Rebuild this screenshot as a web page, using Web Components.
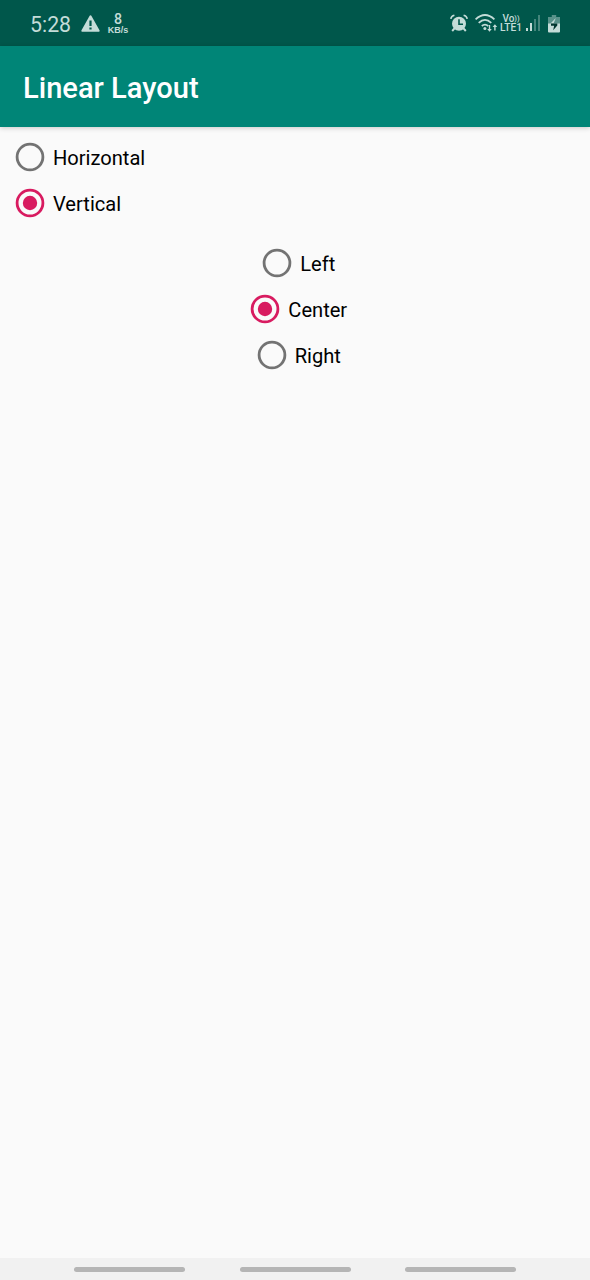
<!DOCTYPE html>
<html lang="en">
<head>
<meta charset="utf-8">
<title>Linear Layout</title>
<style>
html, body { margin: 0; height: 100%; overflow: hidden; }
body { font-family: Roboto, "Noto Sans", sans-serif; background: #fafafa; }
</style>
</head>
<body>
<phone-screen>
  <status-bar slot="status"></status-bar>
  <app-bar slot="bar">Linear Layout</app-bar>
  <radio-set>
    <radio-option>Horizontal</radio-option>
    <radio-option checked>Vertical</radio-option>
  </radio-set>
  <radio-set centered>
    <radio-option>Left</radio-option>
    <radio-option checked>Center</radio-option>
    <radio-option>Right</radio-option>
  </radio-set>
  <nav-bar slot="nav"></nav-bar>
</phone-screen>
<script>
function define(name, html) {
  const t = document.createElement('template');
  t.innerHTML = html;
  customElements.define(name, class extends HTMLElement {
    constructor() {
      super();
      this.attachShadow({ mode: 'open' }).appendChild(t.content.cloneNode(true));
    }
  });
}

define('phone-screen', `
<style>
:host { display: flex; flex-direction: column; height: 1280px; width: 590px; background: #fafafa; }
main { flex: 1; display: flex; flex-direction: column; gap: 14.3px; padding: 7px 7.5px 7px 7px; }
</style>
<slot name="status"></slot><slot name="bar"></slot>
<main><slot></slot></main>
<slot name="nav"></slot>`);

define('status-bar', `
<style>
:host { display: flex; justify-content: space-between; height: 46px; box-sizing: border-box; background: #00574b; color: #c4dcd8; padding: 0 30px; }
div { display: flex; align-items: center; height: 46px; }
.time { font-size: 21.3px; line-height: 26px; padding-top: 3px; width: 51px; white-space: nowrap; }
.speed, .lte { display: flex; flex-direction: column; align-items: center; justify-content: center; }
.speed { width: 22px; margin-left: 7px; }
.speed b { font: 500 14.2px/12px Roboto, sans-serif; padding-top: 1px; }
.speed span { font: 700 9px/10px "Liberation Sans", sans-serif; white-space: nowrap; }
.lte { font-weight: 500; width: 22px; font-size: 10px; line-height: 9.5px; }
.lte span { white-space: nowrap; height: 9.5px; }
.lte small { font-size: 7.5px; line-height: 1; vertical-align: 1px; }
.lte span:last-child { font-size: 10.2px; }
svg { display: block; fill: currentColor; flex: none; }
</style>
<div>
  <span class="time">5:28</span>
  <svg width="19" height="17" viewBox="0 0 19 17"><path fill-rule="evenodd" d="M8.5.9a1.1 1.1 0 0 1 2 0l8 14.3c.4.8 0 1.5-.9 1.5H1.4c-.9 0-1.3-.7-.9-1.5ZM8.4 5.5v5.6h2.2V5.5Zm0 7v2.1h2.2v-2.1Z"/></svg>
  <div class="speed"><b>8</b><span>KB/s</span></div>
</div>
<div>
  <svg width="18" height="19" viewBox="0 0 18 19"><circle cx="9" cy="9.8" r="7"/><path d="M4.7 14.2 2.2 17M13.3 14.2l2.5 2.8" stroke="currentColor" stroke-width="2"/><path d="M.8 4.8Q1.2 2 4.4 1.2M17.2 4.8Q16.8 2 13.6 1.2" fill="none" stroke="currentColor" stroke-width="1.6"/><path d="M9 5.2v5h4" fill="none" stroke="#00574b" stroke-width="1.6"/></svg>
  <svg width="23" height="20" viewBox="0 0 23 20" style="margin:0 2px 0 7px"><g fill="none" stroke="currentColor" stroke-width="1.8"><path d="M.6 6.3Q10-2.4 19.4 6.3M3.7 9.8Q10 4 16.3 9.8M6.8 13Q10 10.2 13.2 13"/></g><circle cx="9.9" cy="15.6" r="1.5"/><path d="M13.8 12h1.4v4h1.6l-2.3 2.8-2.3-2.8h1.6ZM20.6 17.5h-1.4v-3.5h-1.6l2.3-2.8 2.3 2.8h-1.6Z"/></svg>
  <div class="lte"><span>Vo<small>))</small></span><span>LTE1</span></div>
  <svg width="16" height="18" viewBox="0 0 16 18" style="margin-left:3px"><path d="M1 14h2v3H1ZM5 9h2v8H5Z"/><path opacity=".35" d="M9 5h2v12H9ZM13 1h2v16h-2Z"/></svg>
  <svg width="12" height="19" viewBox="0 0 12 19" style="margin-left:7px"><path opacity=".45" d="M3.8 1h4.4v2H12v7H0V3h3.8Z"/><path d="M0 9.5h12v8q0 1-1 1H1q-1 0-1-1Z"/><path d="M7.8 4 5.5 9.5H2.5Z"/><path fill="#00362f" d="M3 9.6h6.3v1.8L5.2 16.2l.9-4.4H3Z"/></svg>
</div>`);

define('app-bar', `
<style>
:host { display: flex; align-items: center; height: 81px; box-sizing: border-box; padding: 2px 23px 0; background: #008577; color: #fff; font-size: 29.1px; font-weight: 500; box-shadow: 0 1px 5px rgba(0,0,0,.2); }
</style><slot></slot>`);

define('radio-set', `
<style>
:host { display: flex; flex-direction: column; align-items: flex-start; }
:host([centered]) { align-items: center; }
</style><slot></slot>`);

define('radio-option', `
<style>
:host { display: flex; align-items: center; height: 46px; font-size: 20.1px; color: #000; white-space: nowrap; }
svg { display: block; width: 46px; height: 46px; fill: none; stroke: #737373; stroke-width: 2.8; }
.dot { display: none; fill: #d81b60; stroke: none; }
:host([checked]) svg { stroke: #d81b60; }
:host([checked]) .dot { display: block; }
span { padding-top: 1px; }
</style>
<svg viewBox="0 0 46 46"><circle cx="23" cy="23" r="12.9"/><circle class="dot" cx="23" cy="23" r="7.2"/></svg><span><slot></slot></span>`);

define('nav-bar', `
<style>
:host { display: flex; align-items: center; justify-content: center; gap: 54.3px; height: 22px; background: #f1f1f1; }
i { width: 111px; height: 5px; border-radius: 3px; background: #b5b5b5; }
</style><i></i><i></i><i></i>`);
</script>
</body>
</html>
